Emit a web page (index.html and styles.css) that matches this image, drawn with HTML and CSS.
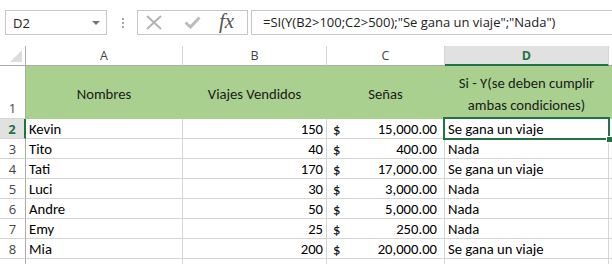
FILE: index.html
```html
<!DOCTYPE html>
<html lang="es">
<head>
    <meta charset="UTF-8">
    <title>SI - Y</title>
    <link rel="stylesheet" href="styles.css">
</head>
<body>
    <div class="toolbar">
        <div class="namebox">
            <span>D2</span>
            <span class="caret"></span>
        </div>
        <div class="grip"><i></i><i></i><i></i></div>
        <div class="fxbox">
            <svg class="icon-cancel" width="16" height="15" viewBox="0 0 16 15">
                <path d="M1 1 L15 14 M15 1 L1 14" stroke="#b4b4b4" stroke-width="2" fill="none"/>
            </svg>
            <svg class="icon-enter" width="17" height="13" viewBox="0 0 17 13">
                <path d="M1.5 6.5 L6.5 11 L15.5 1.5" stroke="#bcbcbc" stroke-width="3" fill="none"/>
            </svg>
            <span class="fx">fx</span>
        </div>
        <div class="formula">=SI(Y(B2&gt;100;C2&gt;500);"Se gana un viaje";"Nada")</div>
    </div>

    <div class="sheet">
        <div class="cell corner"></div>
        <div class="cell col-head">A</div>
        <div class="cell col-head">B</div>
        <div class="cell col-head">C</div>
        <div class="cell col-head active">D</div>
        <div class="cell col-head"></div>

        <div class="cell row-head row-tall">1</div>
        <div class="cell fill center">Nombres</div>
        <div class="cell fill center">Viajes Vendidos</div>
        <div class="cell fill center">Señas</div>
        <div class="cell fill center wrap">Si - Y(se deben cumplir ambas condiciones)</div>
        <div class="cell fill"></div>

        <div class="cell row-head active">2</div>
        <div class="cell">Kevin</div>
        <div class="cell num">150</div>
        <div class="cell money"><span>$</span><span>15,000.00</span></div>
        <div class="cell selected">Se gana un viaje</div>
        <div class="cell"></div>

        <div class="cell row-head">3</div>
        <div class="cell">Tito</div>
        <div class="cell num">40</div>
        <div class="cell money"><span>$</span><span>400.00</span></div>
        <div class="cell">Nada</div>
        <div class="cell"></div>

        <div class="cell row-head">4</div>
        <div class="cell">Tati</div>
        <div class="cell num">170</div>
        <div class="cell money"><span>$</span><span>17,000.00</span></div>
        <div class="cell">Se gana un viaje</div>
        <div class="cell"></div>

        <div class="cell row-head">5</div>
        <div class="cell">Luci</div>
        <div class="cell num">30</div>
        <div class="cell money"><span>$</span><span>3,000.00</span></div>
        <div class="cell">Nada</div>
        <div class="cell"></div>

        <div class="cell row-head">6</div>
        <div class="cell">Andre</div>
        <div class="cell num">50</div>
        <div class="cell money"><span>$</span><span>5,000.00</span></div>
        <div class="cell">Nada</div>
        <div class="cell"></div>

        <div class="cell row-head">7</div>
        <div class="cell">Emy</div>
        <div class="cell num">25</div>
        <div class="cell money"><span>$</span><span>250.00</span></div>
        <div class="cell">Nada</div>
        <div class="cell"></div>

        <div class="cell row-head">8</div>
        <div class="cell">Mia</div>
        <div class="cell num">200</div>
        <div class="cell money"><span>$</span><span>20,000.00</span></div>
        <div class="cell">Se gana un viaje</div>
        <div class="cell"></div>

        <div class="cell row-head last"></div>
        <div class="cell last"></div>
        <div class="cell last"></div>
        <div class="cell last"></div>
        <div class="cell last"></div>
        <div class="cell last"></div>
    </div>
</body>
</html>
```

FILE: styles.css
```css
:root {
    --grid-line: #d4d4d4;
    --head-line: #ababab;
    --excel-green: #217346;
    --header-fill: #a9d08e;
    --active-head: #e1e1e1;
}

body {
    margin: 0;
    height: 264px;
    background: white;
    overflow: hidden;
    font-family: 'Carlito', 'Lato', sans-serif;
}

/* Formula bar */
.toolbar {
    display: flex;
    align-items: flex-start;
    height: 46px;
    padding: 10px 0 0 5px;
    box-sizing: border-box;
    font-family: 'Open Sans', sans-serif;
    font-size: 13px;
    color: #222;
}

.namebox {
    display: flex;
    align-items: center;
    justify-content: space-between;
    width: 102px;
    height: 25px;
    padding: 0 6px 0 7px;
    box-sizing: border-box;
    border: 1px solid #c6c6c6;
}

.caret {
    width: 0;
    height: 0;
    border-left: 4px solid transparent;
    border-right: 4px solid transparent;
    border-top: 4px solid #777;
}

.grip {
    display: flex;
    flex-direction: column;
    gap: 2px;
    margin: 8px 13px 0 15px;
}

.grip i {
    display: block;
    width: 2px;
    height: 2px;
    background: #a6a6a6;
}

.fxbox {
    display: flex;
    align-items: center;
    width: 111px;
    height: 25px;
    box-sizing: border-box;
    border: 1px solid #c6c6c6;
    padding-left: 8px;
}

.icon-cancel {
    margin-right: 22px;
}

.icon-enter {
    margin-right: 18px;
}

.fx {
    font-family: 'Liberation Serif', serif;
    font-style: italic;
    font-size: 21px;
    color: #555;
    line-height: 1;
    margin-top: -3px;
}

.formula {
    flex: 1;
    height: 25px;
    margin-left: 3px;
    padding-left: 11px;
    box-sizing: border-box;
    border: 1px solid #c6c6c6;
    border-right: none;
    line-height: 23px;
    white-space: nowrap;
}

/* Sheet grid */
.sheet {
    display: grid;
    grid-template-columns: 26px 157px 144px 118px 164px 1fr;
    grid-template-rows: 20px 53px repeat(7, 20px) 5px;
    font-size: 14.67px;
    color: #000;
}

.cell {
    display: flex;
    align-items: center;
    padding: 0 3px;
    box-sizing: border-box;
    border-right: 1px solid var(--grid-line);
    border-bottom: 1px solid var(--grid-line);
    white-space: nowrap;
    overflow: hidden;
}

.cell.last {
    border-bottom: none;
}

.corner {
    position: relative;
    border-right-color: var(--head-line);
    border-bottom-color: var(--head-line);
}

.corner::after {
    content: '';
    position: absolute;
    right: 3px;
    bottom: 3px;
    border-left: 12px solid transparent;
    border-bottom: 12px solid #dcdcdc;
}

.col-head {
    justify-content: center;
    font-family: 'Open Sans', sans-serif;
    font-size: 12.5px;
    color: #444;
    border-bottom-color: var(--head-line);
}

.col-head.active {
    background: var(--active-head);
    color: var(--excel-green);
    font-weight: bold;
    border-bottom: 2px solid var(--excel-green);
}

.row-head {
    justify-content: center;
    padding: 0;
    font-family: 'Open Sans', sans-serif;
    font-size: 13px;
    color: #444;
    border-right-color: var(--head-line);
}

.row-head.row-tall {
    align-items: flex-end;
    padding-bottom: 1px;
}

.row-head.active {
    background: var(--active-head);
    color: var(--excel-green);
    font-weight: bold;
    border-right: 2px solid var(--excel-green);
}

.fill {
    background: var(--header-fill);
    border-color: var(--header-fill);
    color: #1a1a1a;
}

.center {
    justify-content: center;
    text-align: center;
    padding-top: 4px;
}

.wrap {
    white-space: normal;
    line-height: 22px;
    padding: 4px 8px 0;
}

.num {
    justify-content: flex-end;
}

.money {
    justify-content: space-between;
    padding: 0 7px 0 6px;
}

.selected {
    position: relative;
    overflow: visible;
}

.selected::before {
    content: '';
    position: absolute;
    left: -2px;
    top: -2px;
    right: -2px;
    bottom: -2px;
    border: 2px solid var(--excel-green);
    z-index: 1;
}

.selected::after {
    content: '';
    position: absolute;
    right: -5px;
    bottom: -5px;
    width: 5px;
    height: 5px;
    background: var(--excel-green);
    border: 1px solid white;
    z-index: 2;
}
```
